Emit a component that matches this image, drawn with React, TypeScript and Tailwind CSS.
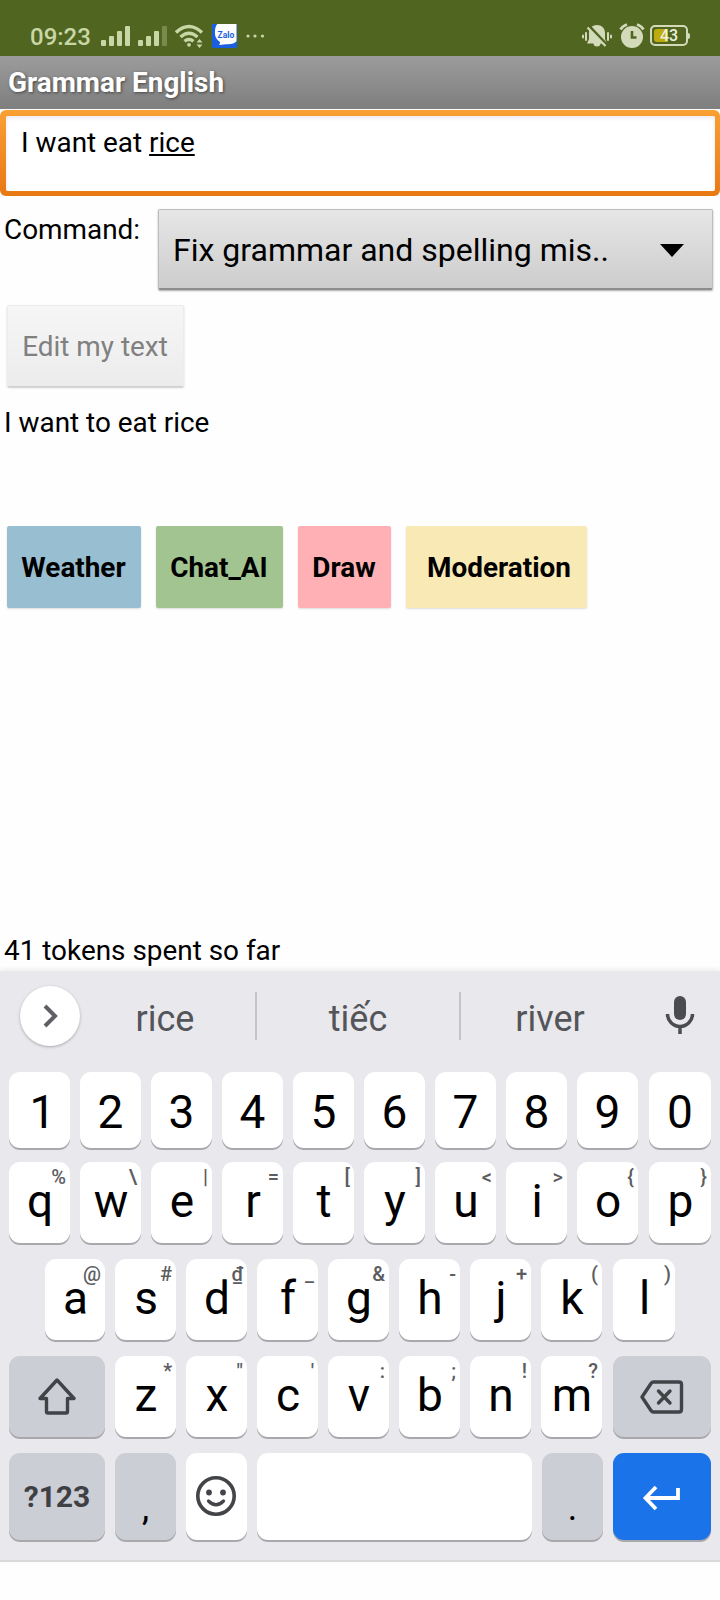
import type { ReactNode } from "react";

type KeyDef = { label: string; hint?: string };

const digits: KeyDef[] = "1234567890".split("").map((label) => ({ label }));

const pair = (letters: string, hints: string[]): KeyDef[] =>
  letters.split("").map((label, i) => ({ label, hint: hints[i] }));

const topRow = pair("qwertyuiop", ["%", "\\", "|", "=", "[", "]", "<", ">", "{", "}"]);
const homeRow = pair("asdfghjkl", ["@", "#", "₫", "_", "&", "-", "+", "(", ")"]);
const bottomRow = pair("zxcvbnm", ["*", '"', "'", ":", ";", "!", "?"]);

const keyBase =
  "relative flex items-center justify-center rounded-[11px] shadow-[0_2px_0_#a9a9ad]";

function LetterKey({ label, hint, size = "w-[61px]" }: KeyDef & { size?: string }) {
  return (
    <button className={`${keyBase} h-full shrink-0 bg-white pb-[4px] pl-px text-[46px] leading-none text-black ${size}`}>
      {label}
      {hint && (
        <span className="absolute right-[4px] top-[5px] text-[20px] font-medium leading-[20px] text-[#5c5d60]">
          {hint}
        </span>
      )}
    </button>
  );
}

function DigitKey({ label }: KeyDef) {
  return (
    <button
      className={`${keyBase} h-full w-[61px] shrink-0 bg-white pt-[3px] text-[46px] leading-none text-black last:ml-px last:w-[62px] ${label === "1" ? "pl-[6px]" : ""}`}
    >
      {label}
    </button>
  );
}

function GrayKey({ className, children }: { className: string; children: ReactNode }) {
  return <button className={`${keyBase} h-full shrink-0 bg-[#cbced5] ${className}`}>{children}</button>;
}

function StatusBar() {
  return (
    <header className="flex h-[56px] shrink-0 items-start bg-[#506520] pl-[30px] pr-[32px] pt-[23px] text-[#c9d6a6]">
      <span className="w-[71px] whitespace-nowrap text-[24px] font-medium leading-[28px]">09:23</span>
      <svg className="h-[26px] w-[67px]" viewBox="0 0 67 26" fill="#c9d6a6">
        <rect x="0" y="17" width="5" height="6" rx="1" />
        <rect x="8" y="13" width="5" height="10" rx="1" />
        <rect x="16" y="8" width="5" height="15" rx="1" />
        <rect x="24" y="3" width="5" height="20" rx="1" />
        <rect x="37" y="17" width="5" height="6" rx="1" />
        <rect x="45" y="13" width="5" height="10" rx="1" />
        <rect x="53" y="8" width="5" height="15" rx="1" />
        <rect x="61" y="3" width="5" height="20" rx="1" fill="#788a4c" />
      </svg>
      <svg className="ml-[7px] h-[26px] w-[30px]" viewBox="0 0 30 26" fill="none" stroke="#c9d6a6" strokeWidth="3.400">
        <path d="M1 9.500Q14 -2.500 27 9.500" />
        <path d="M5.500 14Q14 6.500 22.500 14" />
        <path d="M9.500 18.300Q14 14.500 18.500 18.300" />
        <circle cx="14" cy="21.800" r="1.900" fill="#c9d6a6" stroke="none" />
        <path d="M21.500 19.500L24.500 16l3 3.500zM21.500 21.500l3 3.500 3-3.500z" fill="#c9d6a6" stroke="none" />
      </svg>
      <span className="relative ml-[7px] mt-px flex h-[24px] w-[25px] items-center justify-center overflow-hidden bg-[#1a5fe0]">
        <svg className="absolute inset-0 h-full w-full" viewBox="0 0 25 25">
          <path d="M5 0H25V18Q22 21.500 14 21L7 22 8 19Q2.500 15 2.500 9Q2.500 3 5 0z" fill="#fff" />
        </svg>
        <span className="relative pb-[2px] pl-[3px] text-[8.500px] font-bold leading-none text-[#1a5fe0]">Zalo</span>
      </span>
      <svg className="ml-[8px] h-[26px] w-[22px]" viewBox="0 0 22 26" fill="#c9d6a6">
        <circle cx="3" cy="13" r="1.600" />
        <circle cx="10" cy="13" r="1.600" />
        <circle cx="17.500" cy="13" r="1.600" />
      </svg>
      <svg className="ml-auto h-[26px] w-[32px]" viewBox="0 0 32 26">
        <g fill="#d3dab9">
          <path d="M16 2C21.500 2 24 6 24 10V16L26 20.500H6L8 16V10C8 6 10.500 2 16 2z" />
          <path d="M12.500 20h7a3.500 3.500 0 0 1-7 0z" />
          <rect x="4" y="9" width="2" height="9" rx="1" />
          <rect x="1" y="11.500" width="2" height="4" rx="1" />
          <rect x="26" y="9" width="2" height="9" rx="1" />
          <rect x="29" y="11.500" width="2" height="4" rx="1" />
        </g>
        <path d="M8 3L26 22" stroke="#506520" strokeWidth="3" />
        <path d="M6.500 4.500L24.500 23" stroke="#d3dab9" strokeWidth="2.200" />
      </svg>
      <svg className="ml-[6px] h-[26px] w-[26px]" viewBox="0 0 26 26">
        <circle cx="13" cy="14" r="11" fill="#d3dab9" />
        <path d="M1.500 6.500Q3.500 3 8 1.500M24.500 6.500Q22.500 3 18 1.500" fill="none" stroke="#d3dab9" strokeWidth="2.600" />
        <path d="M13 8v6.500h4.500" fill="none" stroke="#506520" strokeWidth="2.600" />
      </svg>
      <span className="relative ml-[5px] mt-[2px] flex h-[21px] w-[38px] items-center rounded-[5px] border-2 border-[#d3dab9] p-[2px]">
        <span className="h-full w-[14px] rounded-l-[3px] bg-[#beac0e]" />
        <span className="absolute inset-0 flex items-center justify-center pt-px text-[16px] font-medium leading-none text-[#eef0df]">
          43
        </span>
        <span className="absolute -right-[4px] top-[6px] h-[6px] w-[2px] rounded-r bg-[#d3dab9]" />
      </span>
    </header>
  );
}

const actions = [
  { label: "Weather", style: "w-[134px] bg-[#98bfd1]" },
  { label: "Chat_AI", style: "ml-[15px] w-[127px] bg-[#a2c490]" },
  { label: "Draw", style: "ml-[15px] w-[93px] bg-[#ffb0b4]" },
  { label: "Moderation", style: "ml-[15px] w-[181px] bg-[#f9e9b4] pl-[6px]" },
];

function AppContent() {
  return (
    <main className="flex h-[862px] shrink-0 flex-col text-[27.900px] leading-[32px] text-black">
      <div className="mt-px h-[86px] shrink-0 rounded-[6px] bg-linear-to-b from-[#f9a033] to-[#e87812] p-[5.500px]">
        <div className="h-full rounded-[2px] bg-white pl-[15.500px] pt-[11px] shadow-[inset_0_2px_4px_#e9e9f2]">
          I want eat <span className="underline decoration-[1.500px] underline-offset-[2px]">rice</span>
        </div>
      </div>
      <div className="mt-[13px] flex h-[80px] shrink-0 items-start pl-[4px]">
        <span className="w-[154px] pt-[5px]">Command:</span>
        <button className="flex h-[81px] w-[555px] items-center justify-between rounded-[2px] border border-[#bdbdbd] border-b-2 border-b-[#8d8d8d] bg-linear-to-b from-[#e6e6e6] to-[#cdcdcd] pl-[14px] pr-[28px] pt-[2px] text-[32px] leading-none shadow-[0_1px_2px_#aaa]">
          <span className="whitespace-nowrap">Fix grammar and spelling mis..</span>
          <svg className="mt-px h-[13px] w-[24px]" viewBox="0 0 24 13">
            <path d="M0 0H24L12 13z" />
          </svg>
        </button>
      </div>
      <button className="ml-[7px] mt-[16px] flex h-[82px] w-[177px] shrink-0 items-center justify-center rounded-[2px] border border-[#ececec] border-b-[#cfcfcf] bg-linear-to-b from-[#f6f6f6] to-[#ececec] pt-px text-[#808080] shadow-[0_1px_2px_#ccc]">
        <span className="-ml-px whitespace-nowrap">Edit my text</span>
      </button>
      <p className="mt-[20px] pl-[4px]">I want to eat rice</p>
      <div className="mt-[87px] flex h-[82px] shrink-0 pl-[7px]">
        {actions.map((a) => (
          <button
            key={a.label}
            className={`flex h-full shrink-0 items-center justify-center rounded-[2px] pr-px pt-[2px] font-bold shadow-[0_1px_2px_#ddd] ${a.style}`}
          >
            {a.label}
          </button>
        ))}
      </div>
      <p className="mt-auto pb-[4px] pl-[4px]">41 tokens spent so far</p>
    </main>
  );
}

function Suggestions() {
  return (
    <div className="flex h-[101px] shrink-0 items-center pb-[11px] text-[36px] leading-none text-[#545559]">
      <button className="ml-[20px] flex h-[60px] w-[60px] items-center justify-center rounded-full bg-white shadow-[0_1px_3px_#aaa]">
        <svg className="h-[24px] w-[16px]" viewBox="0 0 16 24" fill="none" stroke="#5f6063" strokeWidth="4">
          <path d="M3 2L13 12 3 22" />
        </svg>
      </button>
      <span className="w-[170px] pt-[5px] text-center">rice</span>
      <span className="ml-[5px] h-[48px] w-[2px] bg-[#c4c5c9]" />
      <span className="w-[202px] pt-[5px] text-center">tiếc</span>
      <span className="h-[48px] w-[2px] bg-[#c4c5c9]" />
      <span className="w-[178px] pt-[5px] text-center">river</span>
      <svg className="mb-[2px] ml-auto mr-[25px] h-[40px] w-[30px]" viewBox="0 0 30 40">
        <rect x="9" y="1" width="12" height="24" rx="6" fill="#4b4c50" />
        <path d="M2.500 19a12.500 12.500 0 0 0 25 0M15 31v8" fill="none" stroke="#4b4c50" strokeWidth="3.500" />
      </svg>
    </div>
  );
}

function Keyboard() {
  return (
    <section className="flex h-[591px] shrink-0 flex-col border-b-2 border-[#dadadc] bg-[#e8e8ed] shadow-[0_-2px_4px_#eee]">
      <Suggestions />
      <div className="flex h-[76px] shrink-0 gap-[10px] px-[9px]">
        {digits.map((k) => (
          <DigitKey key={k.label} {...k} />
        ))}
      </div>
      <div className="mt-[14px] flex h-[81px] shrink-0 gap-[10px] px-[9px]">
        {topRow.map((k, i) => (
          <LetterKey key={k.label} {...k} size={i === 9 ? "ml-px w-[62px]" : "w-[61px]"} />
        ))}
      </div>
      <div className="mt-[16px] flex h-[81px] shrink-0 gap-[10px] px-[45px]">
        {homeRow.map((k, i) => (
          <LetterKey key={k.label} {...k} size={i === 0 ? "w-[60px]" : i === 8 ? "ml-px w-[62px]" : "w-[61px]"} />
        ))}
      </div>
      <div className="mt-[16px] flex h-[81px] shrink-0 gap-[10px] px-[9px]">
        <GrayKey className="w-[96px]">
          <svg className="h-[38px] w-[40px]" viewBox="0 0 40 38" fill="none" stroke="#424347" strokeWidth="3.400" strokeLinejoin="round">
            <path d="M20 2L37 20.500H30.500V33.500Q30.500 35 29 35H11Q9.500 35 9.500 33.500V20.500H3z" />
          </svg>
        </GrayKey>
        {bottomRow.map((k) => (
          <LetterKey key={k.label} {...k} />
        ))}
        <GrayKey className="ml-auto w-[98px] pt-px">
          <svg className="h-[34px] w-[44px]" viewBox="0 0 44 34" fill="none" stroke="#424347" strokeWidth="3.400" strokeLinejoin="round" strokeLinecap="round">
            <path d="M13.500 2H39Q41.500 2 41.500 4.500V29.500Q41.500 32 39 32H13.500Q12 32 11 30.500L2 17 11 3.500Q12 2 13.500 2z" />
            <path d="M18.500 11L30 23M30 11L18.500 23" />
          </svg>
        </GrayKey>
      </div>
      <div className="mt-[16px] flex h-[87px] shrink-0 gap-[10px] px-[9px]">
        <GrayKey className="w-[96px] text-[30px] font-bold leading-none text-[#3f4044]">?123</GrayKey>
        <GrayKey className="w-[61px] pt-[22px] text-[36px] leading-none">,</GrayKey>
        <button className={`${keyBase} h-full w-[61px] shrink-0 bg-white pb-px pr-px`}>
          <svg className="h-[42px] w-[42px]" viewBox="0 0 42 42" fill="none" stroke="#434448" strokeWidth="3.600">
            <circle cx="21" cy="21" r="18.200" />
            <circle cx="14" cy="17.500" r="2.900" fill="#434448" stroke="none" />
            <circle cx="28" cy="17.500" r="2.900" fill="#434448" stroke="none" />
            <path d="M13.500 26q7.500 7.500 15 0" strokeLinecap="round" strokeWidth="3.200" />
          </svg>
        </button>
        <button className={`${keyBase} h-full min-w-0 flex-1 bg-white`} aria-label="Space" />
        <GrayKey className="w-[61px] pt-[22px] text-[36px] leading-none">.</GrayKey>
        <button className={`${keyBase} h-full w-[98px] shrink-0 bg-[#1a73e8]`}>
          <svg className="mt-[2px] h-[26px] w-[40px]" viewBox="0 0 40 26" fill="none" stroke="#fff" strokeWidth="3.800">
            <path d="M14 2L3.500 13 14 24M3.500 13H36V3" />
          </svg>
        </button>
      </div>
    </section>
  );
}

export default function App() {
  return (
    <div className="flex h-[1600px] w-[720px] flex-col overflow-hidden bg-[#fefefe] font-['Roboto',sans-serif]">
      <StatusBar />
      <div className="flex h-[53px] shrink-0 items-center bg-linear-to-b from-[#9c9c9c] to-[#7e7e7e] pl-[8px] text-[27.900px] font-bold leading-none text-white [text-shadow:1px_1px_3px_#444]">
        Grammar English
      </div>
      <AppContent />
      <Keyboard />
    </div>
  );
}
